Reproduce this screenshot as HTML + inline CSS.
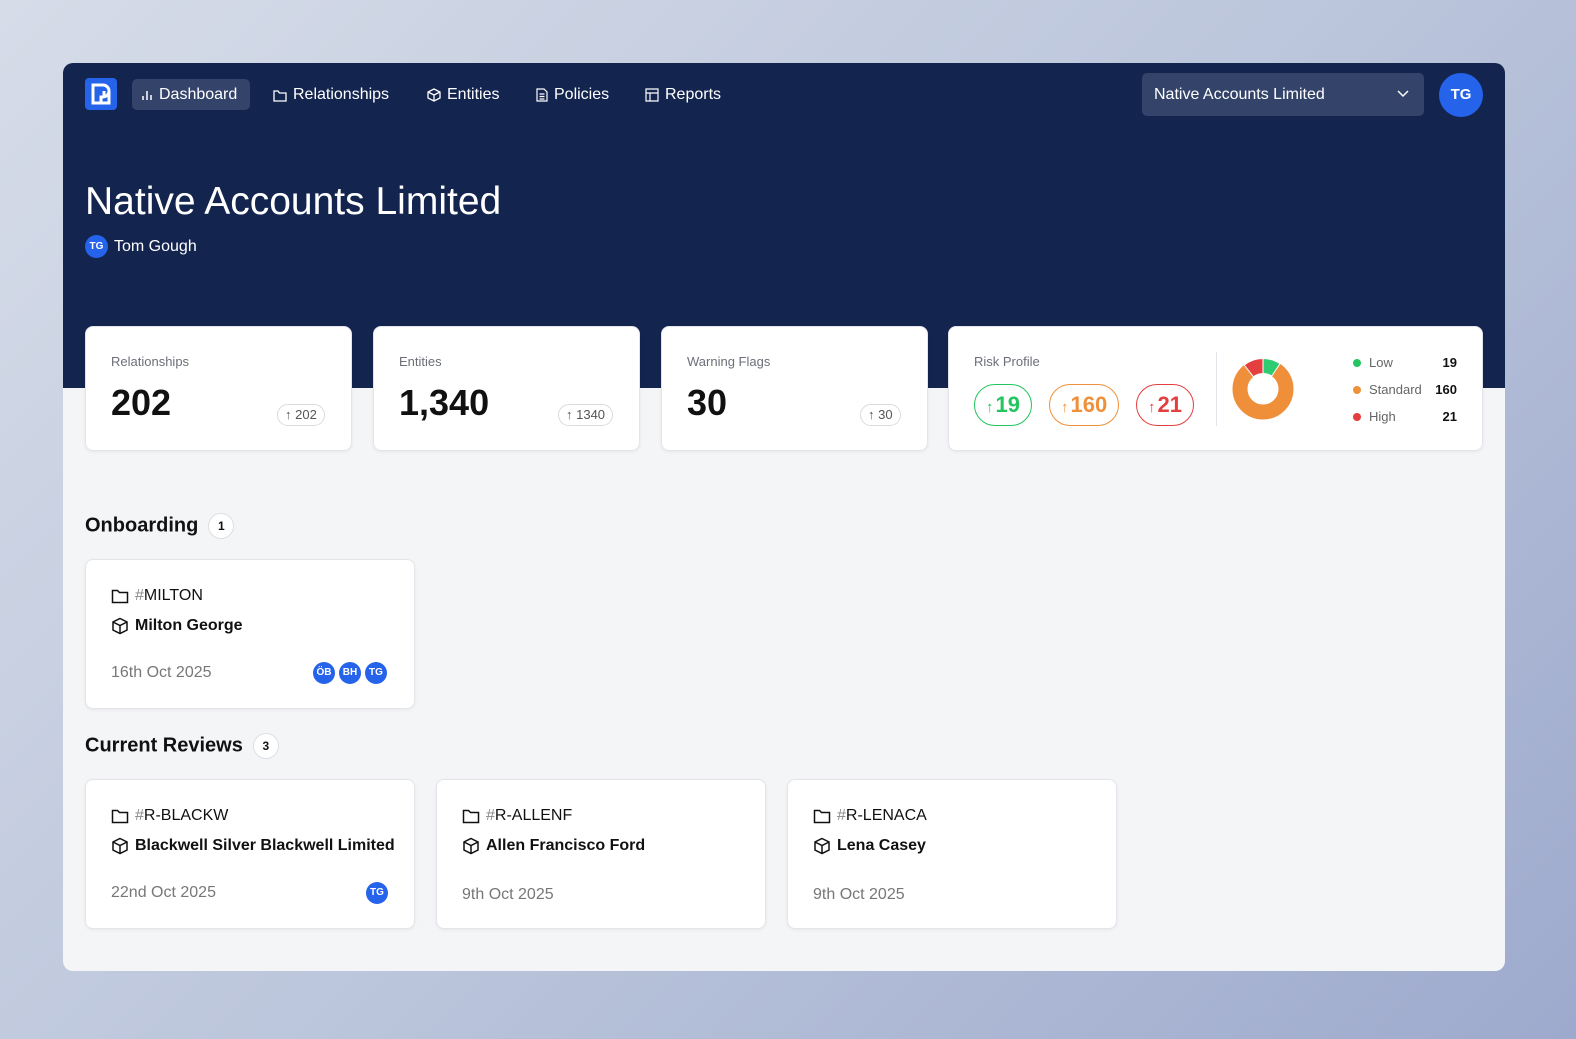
<!DOCTYPE html>
<html><head><meta charset="utf-8"><style>
*{box-sizing:border-box;margin:0;padding:0}
body{width:1576px;height:1039px;overflow:hidden;font-family:"Liberation Sans",sans-serif;background:linear-gradient(135deg,#d6dce8 0%,#bcc6dc 50%,#9eaacd 100%);position:relative}
.frame{position:absolute;left:63px;top:63px;width:1442px;height:908px;border-radius:10px;overflow:hidden;background:#f4f5f7}
.hdr{position:absolute;left:0;top:0;width:100%;height:325px;background:#13244f}
.a{position:absolute}
.nav{color:#fff;font-size:16px;display:flex;align-items:center;gap:6px}
.card{position:absolute;background:#fff;border:1px solid #e3e5ea;border-radius:8px;box-shadow:0 1px 3px rgba(0,0,0,.06)}
.lbl{position:absolute;font-size:13px;color:#6b6f78}
.big{position:absolute;font-size:36px;font-weight:bold;color:#111}
.pill{position:absolute;height:22px;border:1px solid #d8dbe0;border-radius:11px;font-size:13px;color:#555;padding:0 7px;line-height:20px}
.rp{position:absolute;top:57px;height:42px;border-radius:21px;font-size:22px;font-weight:bold;line-height:40px;padding:0 11px}
.rp span{font-size:15px;font-weight:normal;margin-right:2px}
.av{display:inline-block;width:22px;height:22px;border-radius:50%;background:#2563eb;color:#fff;font-size:10px;line-height:22px;text-align:center;font-weight:bold}
.t1{position:absolute;left:25px;font-size:16px;color:#111;display:flex;align-items:center;gap:6px}
.date{position:absolute;left:25px;font-size:16px;color:#777}
h2{position:absolute;font-size:20px;font-weight:bold;color:#111}
.cnt{display:inline-block;width:26px;height:26px;border:1px solid #dcdfe4;border-radius:50%;background:#fff;font-size:12px;text-align:center;line-height:24px;margin-left:10px;vertical-align:middle}
</style></head><body>
<div class="frame">
<div class="hdr"></div>
<div class="a" style="left:22px;top:15px;width:32px;height:32px;background:#2563eb;border-radius:4px">
<svg width="32" height="32" viewBox="0 0 32 32"><path d="M8 7h10a6 6 0 0 1 0 12h-2v6H8zM19 13v6M14 25h10V13" fill="none" stroke="#fff" stroke-width="3"/></svg></div>
<div class="a" style="left:69px;top:16px;width:118px;height:31px;background:#34436a;border-radius:5px"></div>
<div class="a nav" style="left:78px;top:23px"><svg width="12" height="12"><path d="M2 11V7M6 11V2M10 11V6" stroke="#fff" stroke-width="1.5"/></svg>Dashboard</div>
<div class="a nav" style="left:210px;top:23px"><svg width="14" height="13"><path d="M1 2h4l1.5 2H13v8H1z" fill="none" stroke="#fff" stroke-width="1.3"/></svg>Relationships</div>
<div class="a nav" style="left:364px;top:23px"><svg width="14" height="14"><path d="M7 1l6 3v6l-6 3-6-3V4zM1 4l6 3 6-3M7 7v6" fill="none" stroke="#fff" stroke-width="1.3"/></svg>Entities</div>
<div class="a nav" style="left:473px;top:23px"><svg width="12" height="14"><path d="M1 1h7l3 3v9H1zM3.5 6h5M3.5 8.5h5M3.5 11h5" fill="none" stroke="#fff" stroke-width="1.2"/></svg>Policies</div>
<div class="a nav" style="left:582px;top:23px"><svg width="14" height="14"><path d="M1 1h12v12H1zM1 5h12M5 5v8" fill="none" stroke="#fff" stroke-width="1.2"/></svg>Reports</div>
<div class="a" style="left:1079px;top:10px;width:282px;height:43px;background:#34436a;border-radius:5px;color:#fff;font-size:16px;line-height:43px;padding-left:12px">Native Accounts Limited
<svg class="a" style="right:14px;top:16px" width="14" height="10"><path d="M2 2l5 5 5-5" fill="none" stroke="#fff" stroke-width="1.5"/></svg></div>
<div class="a" style="left:1376px;top:10px;width:44px;height:44px;border-radius:50%;background:#2563eb;color:#fff;font-size:15px;font-weight:bold;text-align:center;line-height:44px">TG</div>
<div class="a" style="left:22px;top:117px;font-size:39px;color:#fff">Native Accounts Limited</div>
<div class="a" style="left:22px;top:172px;color:#fff;font-size:16px;display:flex;align-items:center;gap:6px"><span class="av" style="width:23px;height:23px;line-height:23px">TG</span>Tom Gough</div>

<div class="card" style="left:22px;top:263px;width:267px;height:125px"><div class="lbl" style="left:25px;top:27px">Relationships</div><div class="big" style="left:25px;top:55px">202</div><div class="pill" style="left:191px;top:77px">↑ 202</div></div>
<div class="card" style="left:310px;top:263px;width:267px;height:125px"><div class="lbl" style="left:25px;top:27px">Entities</div><div class="big" style="left:25px;top:55px">1,340</div><div class="pill" style="left:184px;top:77px">↑ 1340</div></div>
<div class="card" style="left:598px;top:263px;width:267px;height:125px"><div class="lbl" style="left:25px;top:27px">Warning Flags</div><div class="big" style="left:25px;top:55px">30</div><div class="pill" style="left:198px;top:77px">↑ 30</div></div>
<div class="card" style="left:885px;top:263px;width:535px;height:125px">
<div class="lbl" style="left:25px;top:27px">Risk Profile</div>
<div class="rp" style="left:25px;border:1px solid #22c55e;color:#22c55e"><span>↑</span>19</div>
<div class="rp" style="left:100px;border:1px solid #f0903a;color:#f0903a"><span>↑</span>160</div>
<div class="rp" style="left:187px;border:1px solid #e53e3e;color:#e53e3e"><span>↑</span>21</div>
<div class="a" style="left:267px;top:25px;width:1px;height:74px;background:#e3e5ea"></div>
<svg class="a" style="left:283px;top:31px" width="62" height="62" viewBox="-31 -31 62 62">
<circle r="23" fill="none" stroke="#ef8f3a" stroke-width="15"/>
<path d="M0 -30.5A30.5 30.5 0 0 1 17 -25.3L8.7 -12.9A15.5 15.5 0 0 0 0 -15.5Z" fill="#2ecc71" stroke="#fff" stroke-width="1"/>
<path d="M0 -30.5A30.5 30.5 0 0 0 -18.8 -24L-9.5 -12.2A15.5 15.5 0 0 1 0 -15.5Z" fill="#e53e3e" stroke="#fff" stroke-width="1"/>
</svg>
<div class="a" style="left:404px;top:22px;font-size:13px;line-height:27px;color:#666">
<div><span style="display:inline-block;width:8px;height:8px;border-radius:50%;background:#22c55e;margin-right:8px"></span>Low</div>
<div><span style="display:inline-block;width:8px;height:8px;border-radius:50%;background:#f0903a;margin-right:8px"></span>Standard</div>
<div><span style="display:inline-block;width:8px;height:8px;border-radius:50%;background:#e53e3e;margin-right:8px"></span>High</div></div>
<div class="a" style="right:25px;top:22px;font-size:13px;line-height:27px;color:#111;font-weight:bold;text-align:right"><div>19</div><div>160</div><div>21</div></div>
</div>

<h2 style="left:22px;top:450px">Onboarding<span class="cnt">1</span></h2>
<div class="card" style="left:22px;top:496px;width:330px;height:150px">
<div class="t1" style="top:27px"><svg width="18" height="16"><path d="M1.5 2.5h5l2 2h8v10h-15z" fill="none" stroke="#111" stroke-width="1.5"/></svg><span><span style="color:#888">#</span>MILTON</span></div>
<div class="t1" style="top:57px;font-weight:bold"><svg width="18" height="18"><path d="M9 1.5l7 3.5v8l-7 3.5-7-3.5V5zM2 5l7 3.5L16 5M9 8.5v8" fill="none" stroke="#111" stroke-width="1.5"/></svg>Milton George</div>
<div class="date" style="top:104px">16th Oct 2025</div>
<div class="a" style="left:227px;top:102px;display:flex;gap:4px"><span class="av">ÖB</span><span class="av">BH</span><span class="av">TG</span></div>
</div>

<h2 style="left:22px;top:670px">Current Reviews<span class="cnt">3</span></h2>
<div class="card" style="left:22px;top:716px;width:330px;height:150px">
<div class="t1" style="top:27px"><svg width="18" height="16"><path d="M1.5 2.5h5l2 2h8v10h-15z" fill="none" stroke="#111" stroke-width="1.5"/></svg><span><span style="color:#888">#</span>R-BLACKW</span></div>
<div class="t1" style="top:57px;font-weight:bold"><svg width="18" height="18"><path d="M9 1.5l7 3.5v8l-7 3.5-7-3.5V5zM2 5l7 3.5L16 5M9 8.5v8" fill="none" stroke="#111" stroke-width="1.5"/></svg>Blackwell Silver Blackwell Limited</div>
<div class="date" style="top:104px">22nd Oct 2025</div>
<div class="a" style="left:280px;top:102px"><span class="av">TG</span></div>
</div>
<div class="card" style="left:373px;top:716px;width:330px;height:150px">
<div class="t1" style="top:27px"><svg width="18" height="16"><path d="M1.5 2.5h5l2 2h8v10h-15z" fill="none" stroke="#111" stroke-width="1.5"/></svg><span><span style="color:#888">#</span>R-ALLENF</span></div>
<div class="t1" style="top:57px;font-weight:bold"><svg width="18" height="18"><path d="M9 1.5l7 3.5v8l-7 3.5-7-3.5V5zM2 5l7 3.5L16 5M9 8.5v8" fill="none" stroke="#111" stroke-width="1.5"/></svg>Allen Francisco Ford</div>
<div class="date" style="top:106px">9th Oct 2025</div>
</div>
<div class="card" style="left:724px;top:716px;width:330px;height:150px">
<div class="t1" style="top:27px"><svg width="18" height="16"><path d="M1.5 2.5h5l2 2h8v10h-15z" fill="none" stroke="#111" stroke-width="1.5"/></svg><span><span style="color:#888">#</span>R-LENACA</span></div>
<div class="t1" style="top:57px;font-weight:bold"><svg width="18" height="18"><path d="M9 1.5l7 3.5v8l-7 3.5-7-3.5V5zM2 5l7 3.5L16 5M9 8.5v8" fill="none" stroke="#111" stroke-width="1.5"/></svg>Lena Casey</div>
<div class="date" style="top:106px">9th Oct 2025</div>
</div>
</div>
</body></html>
